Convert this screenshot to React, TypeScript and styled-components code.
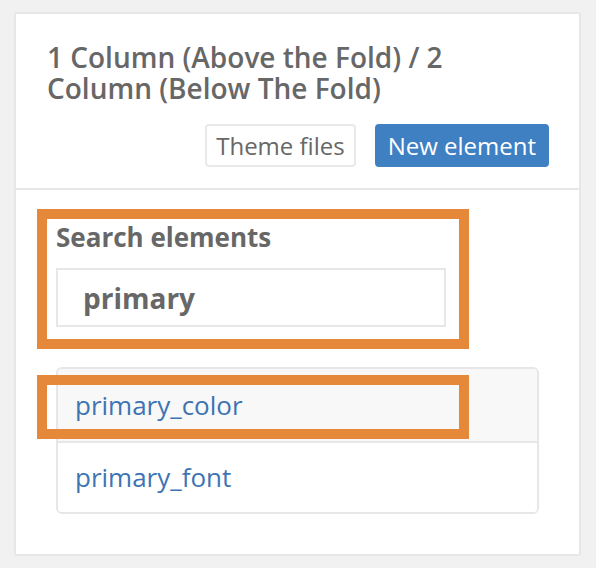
import React from "react";
import styled, { createGlobalStyle } from "styled-components";

const GlobalStyle = createGlobalStyle`
  body {
    margin: 0;
    background: #f1f1f1;
    font-family: "Open Sans", "Liberation Sans", sans-serif;
  }
`;

const Page = styled.div`
  padding: 12px 15px 12px 14px;
`;

const Card = styled.div`
  position: relative;
  box-sizing: border-box;
  width: 567px;
  background: #ffffff;
  border: 2px solid #e7e7e9;
  border-radius: 3px;
`;

const Header = styled.div`
  padding: 28px 30px 21px 31px;
  border-bottom: 2px solid #e7e7e9;
`;

const Title = styled.h2`
  margin: 0;
  font-size: 28px;
  line-height: 31px;
  font-weight: 600;
  color: #676767;
`;

const Actions = styled.div`
  display: flex;
  justify-content: flex-end;
  gap: 19px;
  margin-top: 20px;
`;

const Button = styled.button<{ $primary?: boolean }>`
  box-sizing: border-box;
  height: 43px;
  padding: 0 ${(p) => (p.$primary ? 11 : 9)}px;
  display: inline-flex;
  align-items: center;
  font-family: inherit;
  font-size: 24px;
  border-radius: 4px;
  border: 2px solid ${(p) => (p.$primary ? "#3f80c2" : "#e9e9e9")};
  background: ${(p) => (p.$primary ? "#3f80c2" : "#ffffff")};
  color: ${(p) => (p.$primary ? "#ffffff" : "#676767")};
`;

const Body = styled.div`
  padding: 29px 40px 40px;
`;

const Label = styled.label`
  display: block;
  font-size: 26px;
  line-height: 36px;
  font-weight: 700;
  color: #676767;
`;

const SearchInput = styled.input`
  box-sizing: border-box;
  display: block;
  width: 390px;
  height: 59px;
  margin-top: 13px;
  padding: 0 25px;
  border: 2px solid #e7e7e9;
  font-family: inherit;
  font-size: 28px;
  font-weight: 700;
  color: #676767;
  outline: none;
`;

const ListGroup = styled.div`
  margin-top: 40px;
  border: 2px solid #e7e7e9;
  border-radius: 6px;
  overflow: hidden;
`;

const ListItem = styled.a<{ $active?: boolean }>`
  display: block;
  padding: 18px 17px;
  font-size: 26px;
  line-height: 36px;
  color: #3e74b2;
  text-decoration: none;
  background: ${(p) => (p.$active ? "#f8f8f8" : "#ffffff")};
  & + & {
    border-top: 2px solid #e7e7e9;
    padding: 16px 17px 17px;
  }
`;

const Highlight = styled.div<{ $top: number; $height: number }>`
  position: absolute;
  left: 21px;
  top: ${(p) => p.$top}px;
  width: 432px;
  height: ${(p) => p.$height}px;
  box-sizing: border-box;
  border: 10px solid #e5883a;
  pointer-events: none;
`;

export default function App() {
  return (
    <>
      <GlobalStyle />
      <Page>
        <Card>
          <Header>
            <Title>1 Column (Above the Fold) / 2 Column (Below The Fold)</Title>
            <Actions>
              <Button>Theme files</Button>
              <Button $primary>New element</Button>
            </Actions>
          </Header>
          <Body>
            <Label htmlFor="search">Search elements</Label>
            <SearchInput id="search" defaultValue="primary" />
            <ListGroup>
              <ListItem $active href="#">
                primary_color
              </ListItem>
              <ListItem href="#">primary_font</ListItem>
            </ListGroup>
          </Body>
          <Highlight $top={195} $height={140} />
          <Highlight $top={361} $height={64} />
        </Card>
      </Page>
    </>
  );
}
